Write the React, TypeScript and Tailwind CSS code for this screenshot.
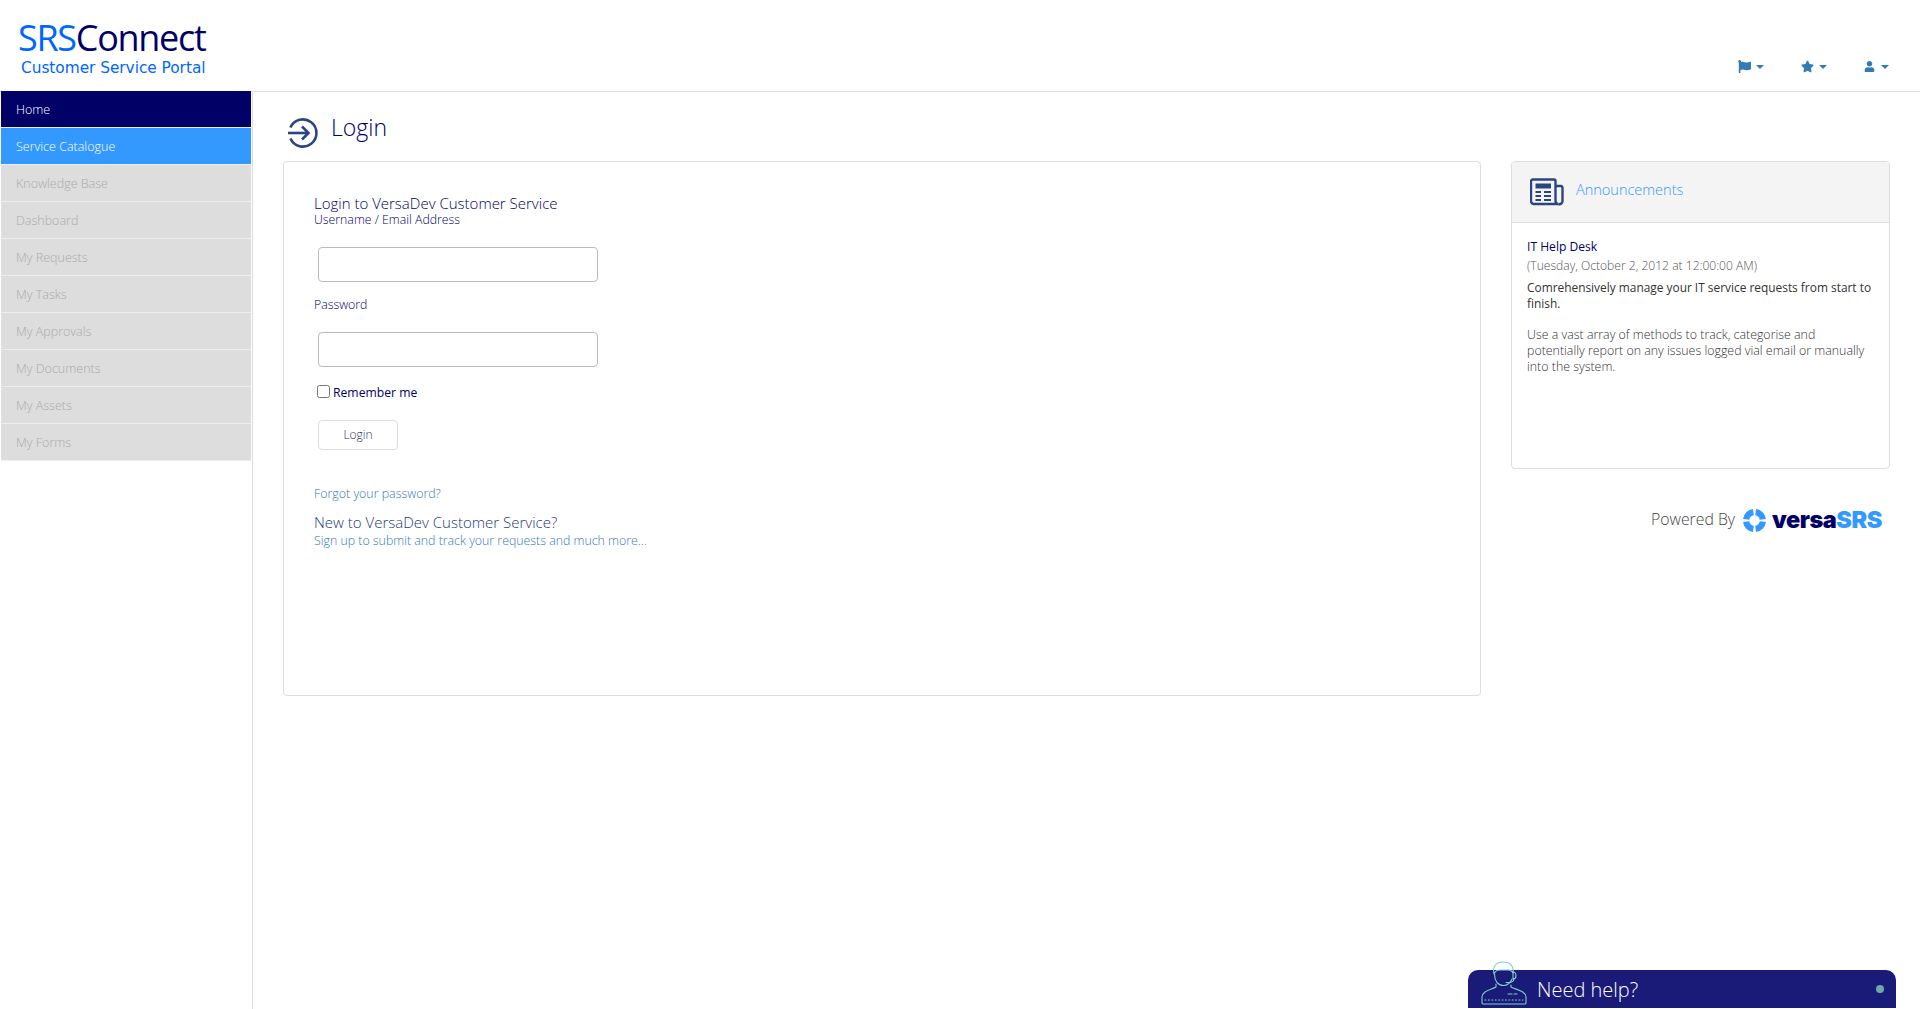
import React from "react";
import { FaFlag, FaStar, FaUser } from "react-icons/fa";

const items = ["Knowledge Base", "Dashboard", "My Requests", "My Tasks", "My Approvals", "My Documents", "My Assets", "My Forms"];

function Caret() {
  return <span className="inline-block w-0 h-0 border-x-[4px] border-x-transparent border-t-[4px] border-t-[#337ab7]" />;
}

function NavIcon({ children, gap }: { children: React.ReactNode; gap: string }) {
  return (
    <div className={`flex items-center ${gap} text-[#337ab7]`}>
      {children}
      <Caret />
    </div>
  );
}

function LoginIcon() {
  return (
    <svg viewBox="0 0 30 30" className="w-[30px] h-[30px] shrink-0" fill="none" stroke="#2a4580" strokeWidth="2.6">
      <path d="M2.4 9.5 A13.6 13.6 0 1 1 2.4 20.5" />
      <path d="M0 15 H20" />
      <path d="M14 8.5 L20.5 15 L14 21.5" />
    </svg>
  );
}

function NewsIcon() {
  return (
    <svg viewBox="0 0 34 28" className="w-[34px] h-[28px] shrink-0">
      <path d="M3 1.5 H24 A1.5 1.5 0 0 1 25.5 3 V23 A3 3 0 0 0 28.5 26 H4 A3 3 0 0 1 1 23 V3 A2 2 0 0 1 3 1.5 Z" fill="none" stroke="#2a4580" strokeWidth="2.4" />
      <path d="M25.5 8 H31 A1.8 1.8 0 0 1 32.5 9.5 V23 A3 3 0 0 1 28.5 26" fill="none" stroke="#2a4580" strokeWidth="2.4" />
      <rect x="5.5" y="5.5" width="15.5" height="5" fill="#2a4580" />
      <path d="M5.5 14 H11 M14 14 H21 M5.5 18 H11 M14 18 H21 M5.5 22 H11 M14 22 H21" stroke="#2a4580" strokeWidth="2" />
    </svg>
  );
}

function VersaLogo() {
  return (
    <svg viewBox="0 0 24 24" className="w-[23px] h-[23px] shrink-0" fill="none" stroke="#3399ff" strokeWidth="6.6">
      <path d="M13.2 3.3 A8.8 8.8 0 0 1 20.7 10.8" />
      <path d="M20.7 13.2 A8.8 8.8 0 0 1 13.2 20.7" />
      <path d="M10.8 20.7 A8.8 8.8 0 0 1 3.3 13.2" />
      <path d="M3.3 10.8 A8.8 8.8 0 0 1 10.8 3.3" />
    </svg>
  );
}

function AgentIcon() {
  return (
    <svg viewBox="0 0 46 44" className="w-[46px] h-[44px]" fill="none" stroke="#7fd0c8" strokeWidth="1.1" strokeLinecap="round" strokeLinejoin="round">
      <path d="M13 13 C11 5 16 1 22 1 C29 1 33 5 32 12 C30 8 27 9 23 9 C19 9 15 8 13 13 Z" />
      <path d="M13.5 13 C13.5 20 17 24.5 22.5 24.5 C26 24.5 29 22.5 31 18" />
      <path d="M32 11 C34 11 35 13 35 15 C35 17 34 18 32 18 Z" />
      <path d="M33 18 C33 21 29 22 25 21.5" />
      <path d="M15 23 L15 26 C9 29 1.5 30 1 36 L1 42 A1.5 1.5 0 0 0 2.5 43 L43.5 43 A1.5 1.5 0 0 0 45 42 L45 36 C44.5 30 36 29 30 26 L30 24" />
      <path d="M27 33 H31 M33 33 H36" />
      <path d="M4 39 H42" strokeDasharray="1 2.4" />
    </svg>
  );
}

export default function App() {
  return (
    <div className="h-screen overflow-hidden bg-white flex flex-col font-['Open_Sans',sans-serif] text-[#000066]">
      <header className="h-[92px] shrink-0 border-b border-[#dddddd] flex justify-between pl-[18px] pr-[31px]">
        <div className="pt-[18px]">
          <div className="text-[36px] leading-[40px] tracking-[-1.3px]">
            <span className="text-[#0066ff]">SRS</span>
            <span>Connect</span>
          </div>
          <div className="pl-[3px] text-[15.4px] leading-[18px] font-['DejaVu_Sans',sans-serif] text-[#0066ff] tracking-[-0.05px] mt-[1px]">Customer Service Portal</div>
        </div>
        <div className="flex items-center gap-[37px] pt-[42px]">
          <NavIcon gap="gap-[5px]"><FaFlag size={13} /></NavIcon>
          <NavIcon gap="gap-[5px]"><FaStar size={13} /></NavIcon>
          <NavIcon gap="gap-[6px]"><FaUser size={11} /></NavIcon>
        </div>
      </header>
      <div className="flex flex-1 min-h-0">
        <aside className="w-[253px] shrink-0 pl-[1px] border-r border-[#dddddd] text-[12.5px] font-light -mt-[1px]">
          <nav className="flex flex-col w-[250px]">
            <a className="h-[37px] flex items-center pl-[15px] pt-[3px] bg-[#000066] text-white border-b border-[#eeeeee]">Home</a>
            <a className="h-[37px] flex items-center pl-[15px] pt-[3px] bg-[#3399ff] text-white border-b border-[#eeeeee]">Service Catalogue</a>
            {items.map((t) => (
              <a key={t} className="h-[37px] flex items-center pl-[15px] pt-[3px] bg-[#dddddd] text-[#aaaaaa] border-b border-[#eeeeee]">{t}</a>
            ))}
          </nav>
        </aside>
        <main className="flex-1 min-w-0 pl-[30px] pr-[31px] pt-[26px]">
          <div className="flex items-start gap-[13px] pl-[5px] h-[43px]">
            <LoginIcon />
            <h1 className="text-[23px] leading-[30px] font-light -mt-[6px]">Login</h1>
          </div>
          <div className="flex gap-[30px] items-start">
            <section className="w-[1198px] h-[535px] shrink-0 border border-[#dddddd] rounded-[4px] pl-[30px] pt-[31px] font-light">
              <h2 className="text-[15px] leading-[20px]">Login to VersaDev Customer Service</h2>
              <label className="block text-[12.3px] leading-[16px] -mt-[1px]">Username / Email Address</label>
              <input type="text" className="block ml-[4px] mt-[19px] w-[280px] h-[35px] border border-[#bbbbbb] rounded-[4px] bg-white" />
              <label className="block text-[12.3px] leading-[16px] mt-[15px]">Password</label>
              <input type="password" className="block ml-[4px] mt-[19px] w-[280px] h-[35px] border border-[#bbbbbb] rounded-[4px] bg-white" />
              <label className="flex items-center ml-[3px] mt-[16px] h-[20px] text-[12.2px] font-normal">
                <input type="checkbox" className="w-[13px] h-[13px] mr-[3px] -mt-[4px]" />
                Remember me
              </label>
              <button className="block ml-[4px] mt-[17px] w-[80px] h-[30px] border border-[#dddddd] rounded-[4px] text-[12px] text-[#333366] bg-white">Login</button>
              <a className="block mt-[35px] text-[12.4px] leading-[18px] text-[#337ab7]">Forgot your password?</a>
              <div className="mt-[9px] text-[15px] leading-[20px] text-[#1a3a7a]">New to VersaDev Customer Service?</div>
              <a className="block text-[12.35px] leading-[16px] text-[#337ab7] mt-[1px]">Sign up to submit and track your requests and much more...</a>
            </section>
            <div className="w-[379px] shrink-0">
              <section className="h-[308px] border border-[#dddddd] rounded-[4px] overflow-hidden font-light">
                <div className="h-[61px] bg-[#f4f4f4] border-b border-[#dddddd] flex items-center pl-[18px] gap-[12px]">
                  <NewsIcon />
                  <span className="text-[14.5px] text-[#3399ff] -mt-[4px]">Announcements</span>
                </div>
                <div className="pl-[15px] pr-[12px] pt-[15px] text-[12.1px] leading-[16px]">
                  <div className="text-[12.1px] leading-[18px] font-normal">IT Help Desk</div>
                  <div className="text-[#555555] mt-[1px] leading-[18px]">(Tuesday, October 2, 2012 at 12:00:00 AM)</div>
                  <p className="text-[11.9px] text-[#333333] font-normal mt-[4px]">Comrehensively manage your IT service requests from start to finish.</p>
                  <p className="mt-[16px] text-[12.4px] text-[#333333] pr-[3px]">Use a vast array of methods to track, categorise and potentially report on any issues logged vial email or manually into the system.</p>
                </div>
              </section>
              <div className="flex items-center mt-[36px] pl-[140px] h-[30px]">
                <span className="text-[15.8px] font-light text-[#444444] mr-[8px]">Powered By</span>
                <VersaLogo />
                <span className="ml-[6px] text-[23.5px] font-black font-['Inter',sans-serif] tracking-[-0.5px] text-[#000066]">versa<span className="text-[#3399ff]">SRS</span></span>
              </div>
            </div>
          </div>
        </main>
      </div>
      <div className="fixed right-[24px] bottom-[1px] w-[428px] h-[38px] rounded-t-[10px] bg-[#1a1a78] flex items-center pl-[69px] pr-[12px] justify-between">
        <div className="absolute left-[13px] -top-[9px]"><AgentIcon /></div>
        <span className="text-[20px] font-light text-white pt-[2px]">Need help?</span>
        <span className="w-[8px] h-[8px] rounded-full bg-[#6fa8a8]" />
      </div>
    </div>
  );
}
